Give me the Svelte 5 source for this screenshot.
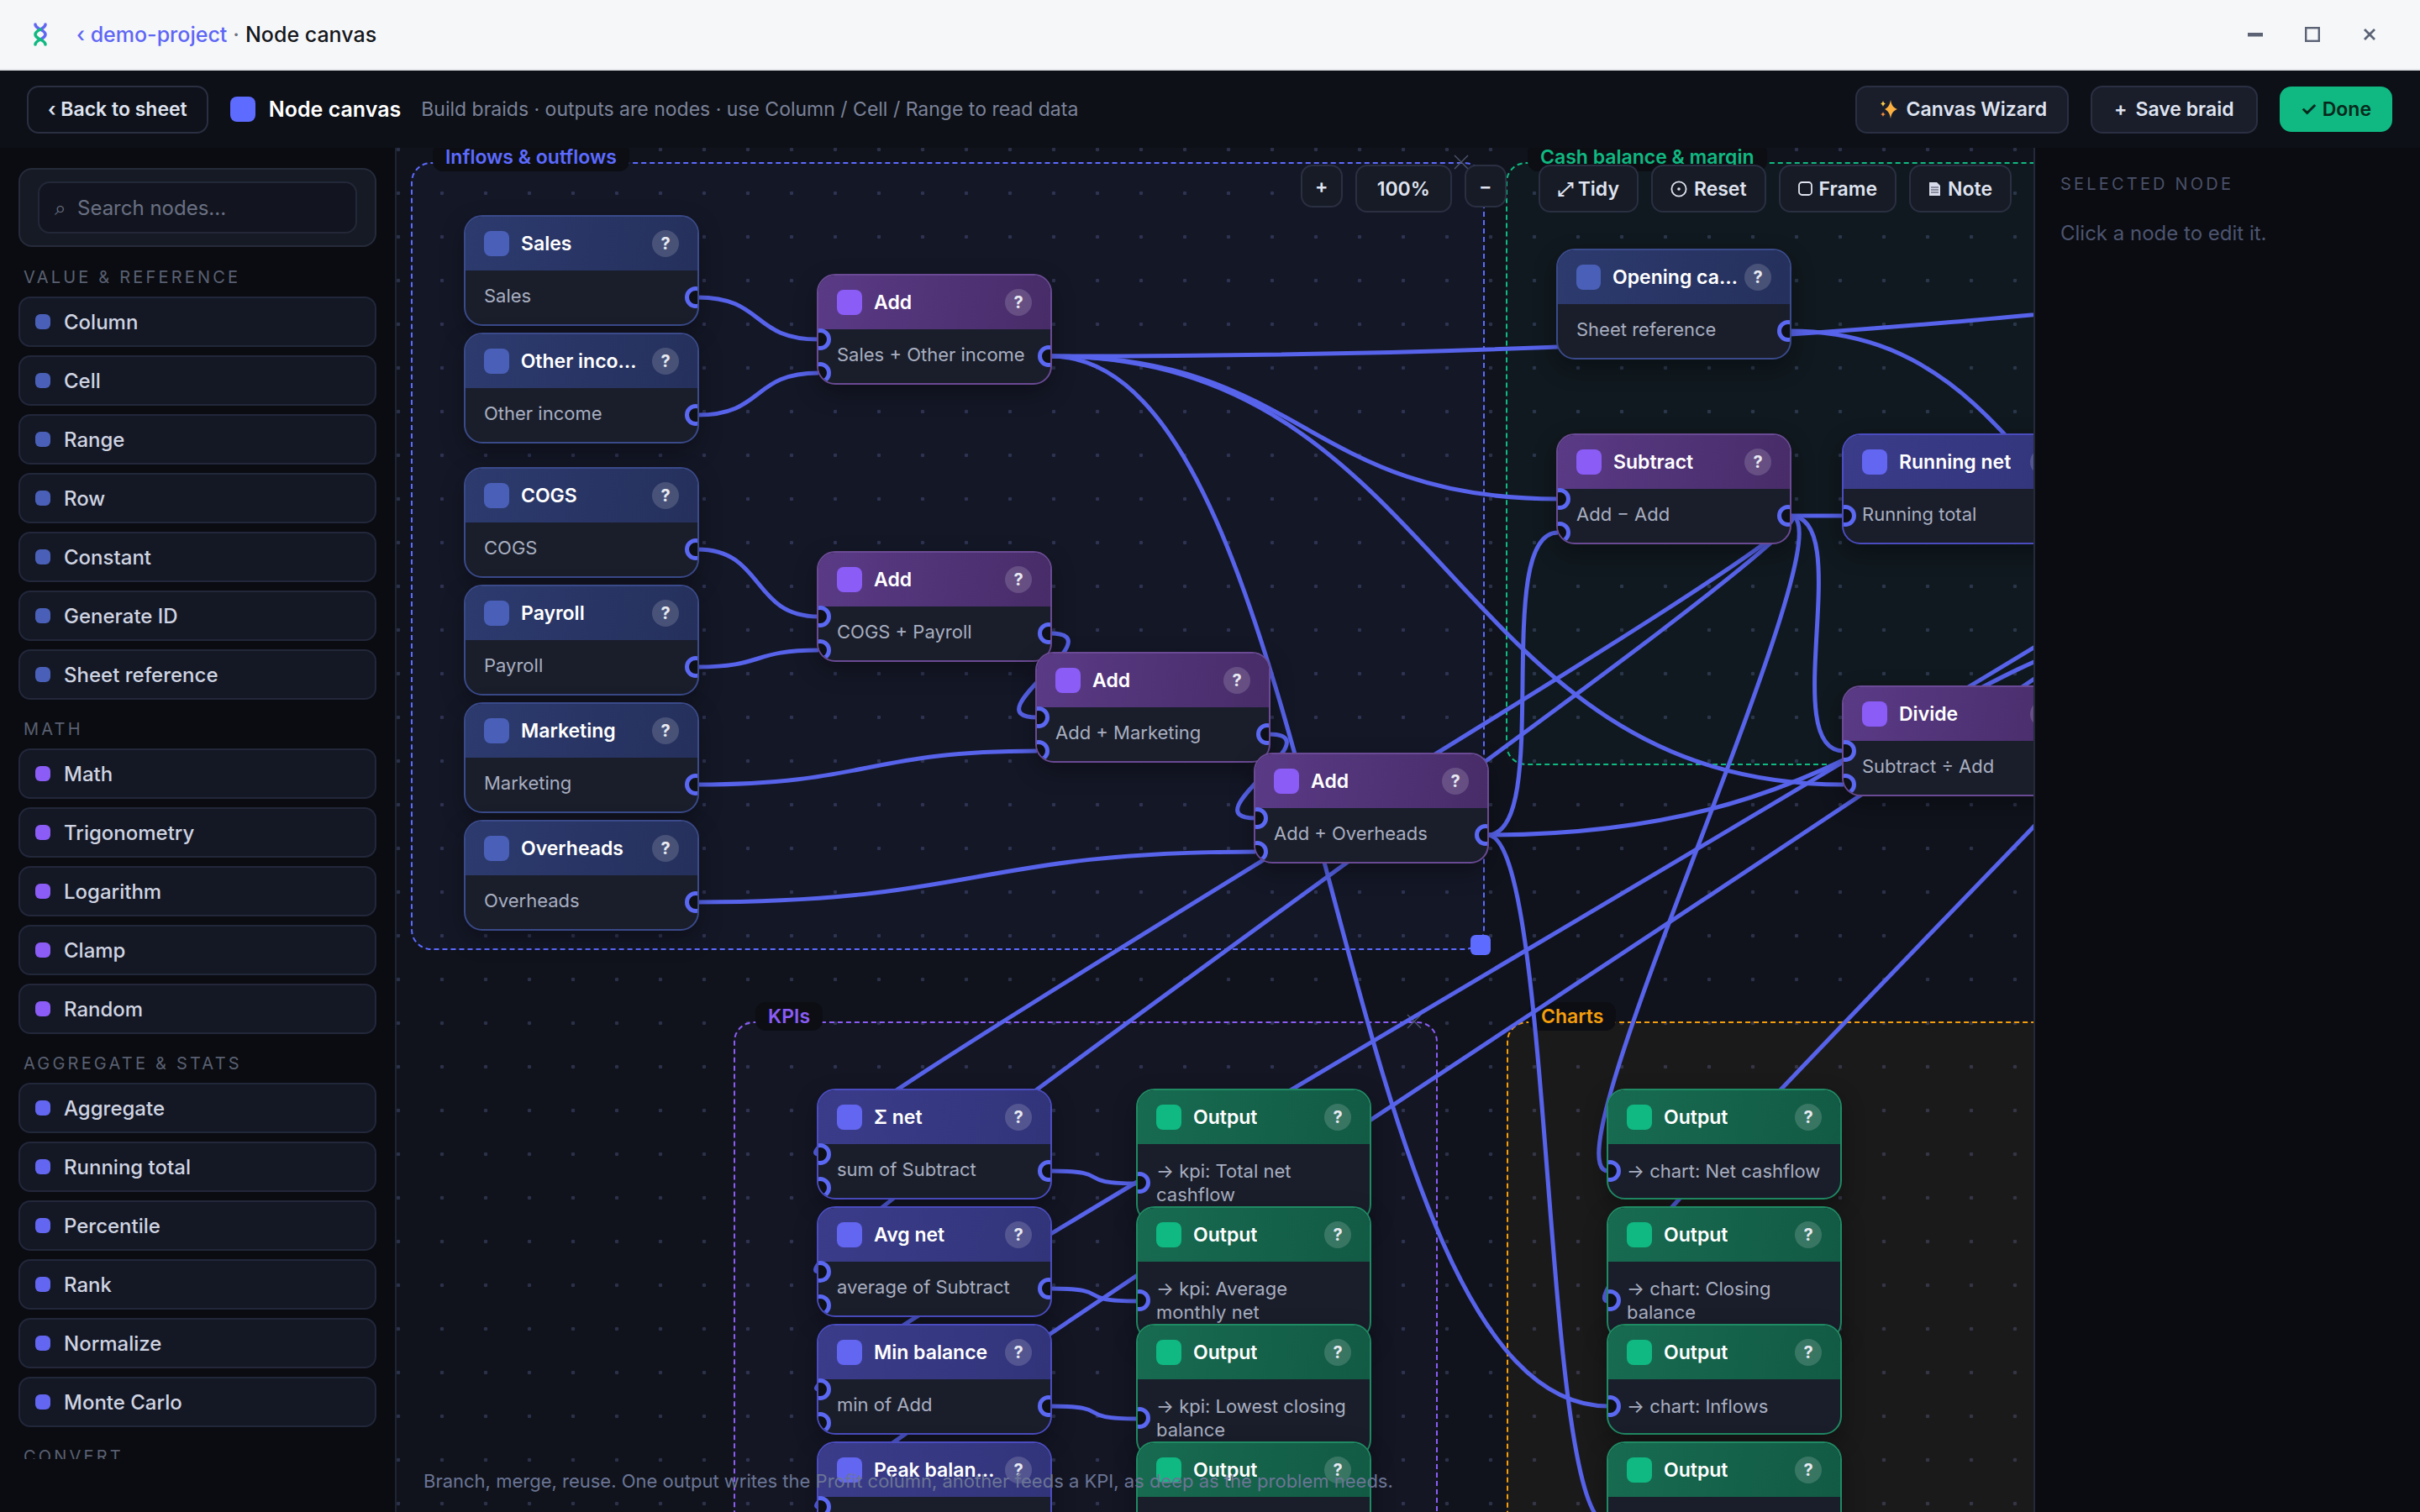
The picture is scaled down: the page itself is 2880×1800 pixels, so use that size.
<script>
  // palette groups for the left panel
  const groups = [
    { label: 'Value & reference', kind: 'src', items: ['Column', 'Cell', 'Range', 'Row', 'Constant', 'Generate ID', 'Sheet reference'] },
    { label: 'Math', kind: 'math', items: ['Math', 'Trigonometry', 'Logarithm', 'Clamp', 'Random'] },
    { label: 'Aggregate & stats', kind: 'stat', items: ['Aggregate', 'Running total', 'Percentile', 'Rank', 'Normalize', 'Monte Carlo'] },
    { label: 'Convert', kind: 'src', items: ['To number', 'To text'] }
  ]

  const frames = [
    { label: 'Inflows & outflows', color: 'indigo', x: 489, y: 193, w: 1278, h: 938, close: true, handle: true },
    { label: 'Cash balance & margin', color: 'green', x: 1792, y: 193, w: 1300, h: 718 },
    { label: 'KPIs', color: 'purple', x: 873, y: 1216, w: 838, h: 900, close: true },
    { label: 'Charts', color: 'orange', x: 1793, y: 1216, w: 1300, h: 900 }
  ]

  const nodes = [
    { id: 'sales', kind: 'src', x: 552, y: 256, title: 'Sales', sub: 'Sales', ins: 0, out: true },
    { id: 'other', kind: 'src', x: 552, y: 396, title: 'Other income', sub: 'Other income', ins: 0, out: true },
    { id: 'cogs', kind: 'src', x: 552, y: 556, title: 'COGS', sub: 'COGS', ins: 0, out: true },
    { id: 'payroll', kind: 'src', x: 552, y: 696, title: 'Payroll', sub: 'Payroll', ins: 0, out: true },
    { id: 'marketing', kind: 'src', x: 552, y: 836, title: 'Marketing', sub: 'Marketing', ins: 0, out: true },
    { id: 'overheads', kind: 'src', x: 552, y: 976, title: 'Overheads', sub: 'Overheads', ins: 0, out: true },
    { id: 'add1', kind: 'math', x: 972, y: 326, title: 'Add', sub: 'Sales + Other income', ins: 2, out: true },
    { id: 'add2', kind: 'math', x: 972, y: 656, title: 'Add', sub: 'COGS + Payroll', ins: 2, out: true },
    { id: 'add3', kind: 'math', x: 1232, y: 776, title: 'Add', sub: 'Add + Marketing', ins: 2, out: true },
    { id: 'add4', kind: 'math', x: 1492, y: 896, title: 'Add', sub: 'Add + Overheads', ins: 2, out: true },
    { id: 'opening', kind: 'src', x: 1852, y: 296, title: 'Opening cash', sub: 'Sheet reference', ins: 0, out: true },
    { id: 'subtract', kind: 'math', x: 1852, y: 516, title: 'Subtract', sub: 'Add − Add', ins: 2, out: true },
    { id: 'running', kind: 'stat', x: 2192, y: 516, title: 'Running net', sub: 'Running total', ins: 1, out: true },
    { id: 'divide', kind: 'math', x: 2192, y: 816, title: 'Divide', sub: 'Subtract ÷ Add', ins: 2, out: true },
    { id: 'sum', kind: 'stat', x: 972, y: 1296, title: 'Σ net', sub: 'sum of Subtract', ins: 2, out: true },
    { id: 'avg', kind: 'stat', x: 972, y: 1436, title: 'Avg net', sub: 'average of Subtract', ins: 2, out: true },
    { id: 'min', kind: 'stat', x: 972, y: 1576, title: 'Min balance', sub: 'min of Add', ins: 2, out: true },
    { id: 'peak', kind: 'stat', x: 972, y: 1716, title: 'Peak balance', sub: 'max of Add', ins: 2, out: true },
    { id: 'k1', kind: 'out', x: 1352, y: 1296, title: 'Output', sub: '→ kpi: Total net cashflow', ins: 1, tall: true },
    { id: 'k2', kind: 'out', x: 1352, y: 1436, title: 'Output', sub: '→ kpi: Average monthly net', ins: 1, tall: true },
    { id: 'k3', kind: 'out', x: 1352, y: 1576, title: 'Output', sub: '→ kpi: Lowest closing balance', ins: 1, tall: true },
    { id: 'k4', kind: 'out', x: 1352, y: 1716, title: 'Output', sub: '→ kpi: Peak closing balance', ins: 1, tall: true },
    { id: 'c1', kind: 'out', x: 1912, y: 1296, title: 'Output', sub: '→ chart: Net cashflow', ins: 1 },
    { id: 'c2', kind: 'out', x: 1912, y: 1436, title: 'Output', sub: '→ chart: Closing balance', ins: 1, tall: true },
    { id: 'c3', kind: 'out', x: 1912, y: 1576, title: 'Output', sub: '→ chart: Inflows', ins: 1 },
    { id: 'c4', kind: 'out', x: 1912, y: 1716, title: 'Output', sub: '→ chart: Outflows', ins: 1 }
  ]

  const byId = Object.fromEntries(nodes.map((n) => [n.id, n]))

  function outPoint(id) {
    if (typeof id !== 'string') return id
    const n = byId[id]
    return { x: n.x + 278, y: n.y + 98 }
  }

  function inPoint(id, slot) {
    if (typeof id !== 'string') return id
    const n = byId[id]
    if (n.ins === 2) return { x: n.x + 2, y: n.y + (slot ? 118 : 78) }
    return { x: n.x + 2, y: n.y + (n.tall ? 113 : 98) }
  }

  // blocks further right on the canvas, out of view
  const links = [
    ['sales', 'add1', 0], ['other', 'add1', 1],
    ['cogs', 'add2', 0], ['payroll', 'add2', 1],
    ['add2', 'add3', 0], ['marketing', 'add3', 1],
    ['add3', 'add4', 0], ['overheads', 'add4', 1],
    ['add1', 'subtract', 0], ['add1', 'divide', 1], ['add1', 'c3', 0],
    ['add1', { x: 3900, y: 296 }, 0],
    ['opening', { x: 2770, y: 794 }, 0],
    ['add4', 'subtract', 1], ['add4', { x: 2829, y: 706 }, 0], ['add4', 'c4', 0],
    ['subtract', 'running', 0], ['subtract', 'divide', 0], ['subtract', 'c1', 0],
    ['subtract', 'sum', 0], ['subtract', 'avg', 0],
    [{ x: 2690, y: 590 }, 'min', 0], [{ x: 2700, y: 600 }, 'peak', 0], [{ x: 2752, y: 600 }, 'c2', 0],
    ['sum', 'k1', 0], ['avg', 'k2', 0], ['min', 'k3', 0], ['peak', 'k4', 0]
  ]

  function wire([from, to, slot]) {
    const a = outPoint(from)
    const b = inPoint(to, slot)
    const dx = b.x - a.x
    const d = dx > 0 ? Math.max(80, dx / 2) : 80
    return `M${a.x} ${a.y} C${a.x + d} ${a.y} ${b.x - d} ${b.y} ${b.x} ${b.y}`
  }

  const wires = links.map(wire)

  const ox = 472
  const oy = 176
</script>

<div class="app">
  <header class="titlebar">
    <svg class="logo" width="16" height="28" viewBox="0 0 16 28" fill="none" stroke-width="3.6" stroke-linecap="round">
      <path d="M2 2 C2 8 14 8 14 14 C14 17 11 18.5 8 20" stroke="#6366f1" />
      <path d="M14 2 C14 5 11 6.5 8 8" stroke="#6366f1" />
      <path d="M8 8 C5 9.5 2 11 2 14 C2 20 14 20 14 26" stroke="#10b981" />
      <path d="M8 20 C5 21.5 2 23 2 26" stroke="#10b981" />
    </svg>
    <div class="crumbs">
      <span class="back">‹ demo-project</span>
      <span class="sep">·</span>
      <span class="current">Node canvas</span>
    </div>
    <div class="win">
      <button class="win-btn" aria-label="Minimize">
        <svg width="18" height="18" viewBox="0 0 18 18"><rect x="0" y="7" width="18" height="4.5" fill="#5b6375" /></svg>
      </button>
      <button class="win-btn" aria-label="Maximize">
        <svg width="18" height="18" viewBox="0 0 18 18"><rect x="1.2" y="1.2" width="15.6" height="15.6" fill="none" stroke="#5b6375" stroke-width="2.4" /></svg>
      </button>
      <button class="win-btn" aria-label="Close">
        <svg width="16" height="16" viewBox="0 0 16 16"><path d="M2 2 L14 14 M14 2 L2 14" stroke="#5b6375" stroke-width="2.8" /></svg>
      </button>
    </div>
  </header>

  <div class="toolbar">
    <button class="btn">‹ Back to sheet</button>
    <span class="tool-icon"></span>
    <span class="tool-title">Node canvas</span>
    <span class="tool-sub">Build braids · outputs are nodes · use Column / Cell / Range to read data</span>
    <div class="tool-right">
      <button class="btn wizard">
        <svg class="spark" width="24" height="22" viewBox="0 0 24 22">
          <path d="M13 0 C14 6 16 9 21 11 C16 13 14 16 13 22 C12 16 10 13 6 11 C10 9 12 6 13 0Z" fill="#fbb040" />
          <path d="M4 1 C4.6 3 5.4 4 7 4.5 C5.4 5 4.6 6 4 8 C3.4 6 2.6 5 1 4.5 C2.6 4 3.4 3 4 1Z" fill="#f7c948" />
          <path d="M4 14 C4.5 16 5.2 16.6 7 17 C5.2 17.6 4.5 18.4 4 20 C3.5 18.4 2.8 17.6 1 17 C2.8 16.6 3.5 16 4 14Z" fill="#f08a3c" />
        </svg>
        Canvas Wizard
      </button>
      <button class="btn"><span>+</span> Save braid</button>
      <button class="btn done">✓ Done</button>
    </div>
  </div>

  <main class="main">
    <aside class="palette">
      <div class="palette-scroll">
        <div class="search-box">
          <label class="search">
            <span class="search-glyph">⌕</span>
            <input placeholder="Search nodes..." />
          </label>
        </div>
        {#each groups as group}
          <section class="group">
            <h4>{group.label}</h4>
            {#each group.items as item}
              <div class="item">
                <span class="dot {group.kind}"></span>
                {item}
              </div>
            {/each}
          </section>
        {/each}
      </div>
    </aside>

    <div class="canvas">
      <div class="dots"></div>

      {#each frames as f}
        <div class="frame {f.color}" style="left:{f.x - ox}px;top:{f.y - oy}px;width:{f.w}px;height:{f.h}px">
          <span class="frame-label">{f.label}</span>
          {#if f.close}
            <svg class="frame-x" width="20" height="18" viewBox="0 0 20 18">
              <path d="M2 1 L18 17 M18 1 L2 17" stroke="#4e556c" stroke-width="1.4" fill="none" />
            </svg>
          {/if}
          {#if f.handle}<span class="frame-handle"></span>{/if}
        </div>
      {/each}

      <svg class="wires" width="1948" height="1624" viewBox="{ox} {oy} 1948 1624">
        {#each wires as d}
          <path {d} />
        {/each}
      </svg>

      {#each nodes as n}
        <article class="node {n.kind}" style="left:{n.x - ox}px;top:{n.y - oy}px">
          <div class="node-head">
            <span class="node-icon"></span>
            <span class="node-title">{n.title}</span>
            <span class="node-help">?</span>
          </div>
          <div class="node-body">
            {n.sub}
            {#if n.ins === 1}<span class="port in mid"></span>{/if}
            {#if n.ins === 2}
              <span class="port in first"></span>
              <span class="port in second"></span>
            {/if}
            {#if n.out}<span class="port out mid"></span>{/if}
          </div>
        </article>
      {/each}

      <div class="controls">
        <div class="ctl-group">
          <button class="ctl small">+</button>
          <button class="ctl zoom">100%</button>
          <button class="ctl small">−</button>
        </div>
        <div class="ctl-group">
          <button class="ctl">⤢ Tidy</button>
          <button class="ctl">
            <svg width="20" height="20" viewBox="0 0 20 20" fill="none">
              <circle cx="10" cy="10" r="8.6" stroke="#dfe3ef" stroke-width="1.8" />
              <circle cx="10" cy="10" r="1.8" fill="#dfe3ef" />
            </svg>
            Reset
          </button>
          <button class="ctl">
            <svg width="17" height="17" viewBox="0 0 17 17" fill="none">
              <rect x="1" y="1" width="15" height="15" rx="3.5" stroke="#dfe3ef" stroke-width="1.8" />
            </svg>
            Frame
          </button>
          <button class="ctl">
            <svg width="15" height="18" viewBox="0 0 15 18">
              <path d="M1 1 H10 L14 5 V17 H1 Z" fill="#d8dcea" />
              <path d="M3 7 H12 M3 10 H12 M3 13 H12" stroke="#3a3f52" stroke-width="1" />
            </svg>
            Note
          </button>
        </div>
      </div>

      <p class="hint">Branch, merge, reuse. One output writes the Profit column, another feeds a KPI, as deep as the problem needs.</p>
    </div>

    <aside class="inspector">
      <h4>Selected node</h4>
      <p>Click a node to edit it.</p>
    </aside>
  </main>
</div>

<style>
  :global(body) {
    margin: 0;
    background: #0a0c11;
  }

  * {
    box-sizing: border-box;
  }

  .app {
    display: flex;
    flex-direction: column;
    height: 1800px;
    overflow: hidden;
    font-family: Inter, "DejaVu Sans", sans-serif;
  }

  button {
    font: inherit;
  }

  .titlebar {
    display: flex;
    align-items: center;
    height: 84px;
    flex: none;
    padding-left: 40px;
    background: #f6f7f9;
    border-bottom: 2px solid #e3e5e9;
    font-size: 25px;
    font-weight: 500;
  }

  .logo {
    margin-right: 35px;
  }

  .crumbs {
    display: flex;
    gap: 7px;
  }

  .back {
    color: #5d66f5;
  }

  .sep {
    color: #6b7280;
  }

  .current {
    color: #15171c;
  }

  .win {
    display: flex;
    margin-left: auto;
    padding-right: 26px;
  }

  .win-btn {
    display: flex;
    align-items: center;
    justify-content: center;
    width: 68px;
    height: 40px;
    padding: 0;
    border: none;
    background: none;
  }

  .toolbar {
    display: flex;
    align-items: center;
    flex: none;
    height: 92px;
    padding: 0 33px 0 32px;
    background: #0d1017;
  }

  .btn {
    display: flex;
    align-items: center;
    gap: 10px;
    height: 57px;
    padding: 0 26px;
    background: #1a1e2b;
    border: 2px solid #2a2f42;
    border-radius: 14px;
    color: #dfe3f0;
    font-size: 23px;
    font-weight: 600;
    white-space: nowrap;
  }

  .btn.wizard {
    gap: 8px;
    padding: 0 24px 0 27px;
  }

  .toolbar > .btn {
    background: #0f121a;
    padding: 0 23px;
  }

  .tool-icon {
    width: 30px;
    height: 30px;
    margin-left: 26px;
    border-radius: 8px;
    background: #5d6bff;
  }

  .tool-title {
    margin-left: 16px;
    color: #fff;
    font-size: 25px;
    font-weight: 600;
  }

  .tool-sub {
    margin-left: 24px;
    color: #7b8299;
    font-size: 23px;
  }

  .tool-right {
    display: flex;
    align-items: center;
    gap: 26px;
    margin-left: auto;
  }

  .done {
    height: 54px;
    padding: 0 25px;
    gap: 8px;
    background: #10b981;
    border: none;
    color: #06281c;
  }

  .main {
    display: flex;
    flex: 1;
    min-height: 0;
  }

  .palette {
    flex: none;
    width: 472px;
    background: #0a0c11;
    border-right: 2px solid #1f2433;
  }

  .palette-scroll {
    height: 1561px;
    overflow: hidden;
    padding: 24px 22px 0;
  }

  .search-box {
    padding: 14px 21px;
    background: #161a25;
    border: 2px solid #262b3b;
    border-radius: 16px;
  }

  .search {
    display: flex;
    align-items: center;
    gap: 14px;
    height: 62px;
    padding: 0 18px;
    background: #12151f;
    border: 2px solid #232839;
    border-radius: 14px;
  }

  .search-glyph {
    color: #6a7083;
    font-size: 24px;
  }

  .search input {
    flex: 1;
    min-width: 0;
    padding: 0;
    background: none;
    border: none;
    outline: none;
    color: #cfd4e2;
    font: inherit;
    font-size: 24px;
  }

  .search input::placeholder {
    color: #6a7083;
  }

  .group {
    margin-top: 23px;
  }

  .group:first-of-type {
    margin-top: 24px;
  }

  h4 {
    margin: 0;
    color: #5a6072;
    font-size: 20px;
    font-weight: 400;
    line-height: 24px;
    letter-spacing: 3.2px;
    text-transform: uppercase;
  }

  .group h4 {
    margin: 0 0 11px 6px;
  }

  .item {
    display: flex;
    align-items: center;
    gap: 16px;
    height: 60px;
    margin-bottom: 10px;
    padding: 0 18px;
    background: #141825;
    border: 2px solid #22273a;
    border-radius: 14px;
    color: #cfd4e2;
    font-size: 24px;
    font-weight: 500;
  }

  .dot {
    flex: none;
    width: 18px;
    height: 18px;
    border-radius: 6px;
  }

  .dot.src {
    background: #4a60b8;
  }

  .dot.math {
    background: #8b5cf6;
  }

  .dot.stat {
    background: #6366f1;
  }

  .canvas {
    position: relative;
    flex: 1;
    min-width: 0;
    overflow: hidden;
    background: #10131c;
  }

  .dots {
    position: absolute;
    inset: 0;
    background-image: radial-gradient(circle, #2b3149 2px, transparent 2.6px);
    background-size: 52px 52px;
    background-position: -24px -24px;
  }

  .frame {
    position: absolute;
    border: 2px dashed;
    border-radius: 24px;
  }

  .frame.indigo {
    color: #5d6bff;
    background: rgba(99, 102, 241, 0.05);
  }

  .frame.green {
    color: #10b981;
    background: rgba(16, 185, 129, 0.04);
  }

  .frame.purple {
    color: #8b5cf6;
    background: rgba(139, 92, 246, 0.04);
  }

  .frame.orange {
    color: #f59e0b;
    background: rgba(245, 158, 11, 0.05);
  }

  .frame-label {
    position: absolute;
    left: 24px;
    top: -25px;
    height: 34px;
    padding: 0 15px;
    background: #0c0e14;
    border-radius: 12px;
    font-size: 23px;
    font-weight: 600;
    line-height: 34px;
    white-space: nowrap;
  }

  .frame-x {
    position: absolute;
    right: 16px;
    top: -11px;
  }

  .frame-handle {
    position: absolute;
    right: -9px;
    bottom: -8px;
    width: 24px;
    height: 24px;
    border-radius: 6px;
    background: #5d6bff;
  }

  .wires {
    position: absolute;
    left: 0;
    top: 0;
    pointer-events: none;
  }

  .wires path {
    fill: none;
    stroke: #5763ea;
    stroke-width: 5;
  }

  .node {
    position: absolute;
    width: 280px;
    overflow: hidden;
    background: #1a1e2b;
    border: 2px solid;
    border-radius: 22px;
    box-shadow: 0 10px 28px rgba(0, 0, 0, 0.32);
  }

  .node-head {
    display: flex;
    align-items: center;
    height: 64px;
    padding: 0 22px;
  }

  .node-icon {
    flex: 0 1 30px;
    height: 30px;
    border-radius: 8px;
  }

  .node-title {
    flex: 0 1 auto;
    min-width: 0;
    margin: 0 8px 0 14px;
    overflow: hidden;
    color: #fff;
    font-size: 23px;
    font-weight: 600;
    text-overflow: ellipsis;
    white-space: nowrap;
  }

  .node-help {
    flex: none;
    width: 32px;
    height: 32px;
    margin-left: auto;
    border-radius: 50%;
    background: rgba(255, 255, 255, 0.16);
    color: #e8eaf2;
    font-size: 20px;
    font-weight: 700;
    line-height: 32px;
    text-align: center;
  }

  .node-body {
    position: relative;
    padding: 16px 22px 20px;
    color: #a8aec0;
    font-size: 22px;
    line-height: 28px;
  }

  .node.out .node-body {
    padding: 18px 22px;
  }

  .port {
    position: absolute;
    width: 26px;
    height: 26px;
    background: #0d1017;
    border: 5px solid #5b68f2;
    border-radius: 50%;
  }

  .port.in {
    left: -11px;
  }

  .port.out {
    right: -11px;
  }

  .port.mid {
    top: calc(50% - 13px);
  }

  .port.first {
    top: -1px;
  }

  .port.second {
    top: 39px;
  }

  .node.src {
    border-color: #3a4a8a;
  }

  .node.src .node-head {
    background: linear-gradient(100deg, #2c3a6e, #25305c);
  }

  .node.src .node-icon {
    background: #4a60b8;
  }

  .node.math {
    border-color: #6a4a94;
  }

  .node.math .node-head {
    background: linear-gradient(100deg, #5a3a86, #472c68);
  }

  .node.math .node-icon {
    background: #8b5cf6;
  }

  .node.stat {
    border-color: #4a4cbf;
  }

  .node.stat .node-head {
    background: linear-gradient(100deg, #3a3c8a, #32347a);
  }

  .node.stat .node-icon {
    background: #6366f1;
  }

  .node.out {
    border-color: #1f8a63;
  }

  .node.out .node-head {
    background: linear-gradient(100deg, #176b50, #125a44);
  }

  .node.out .node-icon {
    background: #10b981;
  }

  .controls {
    position: absolute;
    top: 20px;
    right: 26px;
    display: flex;
    align-items: flex-start;
    gap: 38px;
  }

  .ctl-group {
    display: flex;
    align-items: flex-start;
    gap: 15px;
  }

  .ctl {
    display: flex;
    align-items: center;
    gap: 8px;
    height: 57px;
    padding: 0 21px;
    background: #171b26;
    border: 2px solid #2a2f42;
    border-radius: 14px;
    color: #dfe3ef;
    font-size: 23px;
    font-weight: 600;
    white-space: nowrap;
  }

  .ctl.zoom {
    padding: 0 24px;
  }

  .ctl.small {
    justify-content: center;
    width: 50px;
    height: 51px;
    padding: 0;
  }

  .hint {
    position: absolute;
    left: 32px;
    bottom: 22px;
    margin: 0;
    color: #6b7595;
    font-size: 22px;
    line-height: 30px;
    white-space: nowrap;
  }

  .inspector {
    flex: none;
    width: 460px;
    padding: 33px 30px;
    background: #0a0c11;
    border-left: 2px solid #252a3a;
  }

  .inspector h4 {
    line-height: 20px;
    color: #4a5068;
  }

  .inspector p {
    margin: 34px 0 0;
    color: #4d5570;
    font-size: 24px;
    line-height: 30px;
  }
</style>
